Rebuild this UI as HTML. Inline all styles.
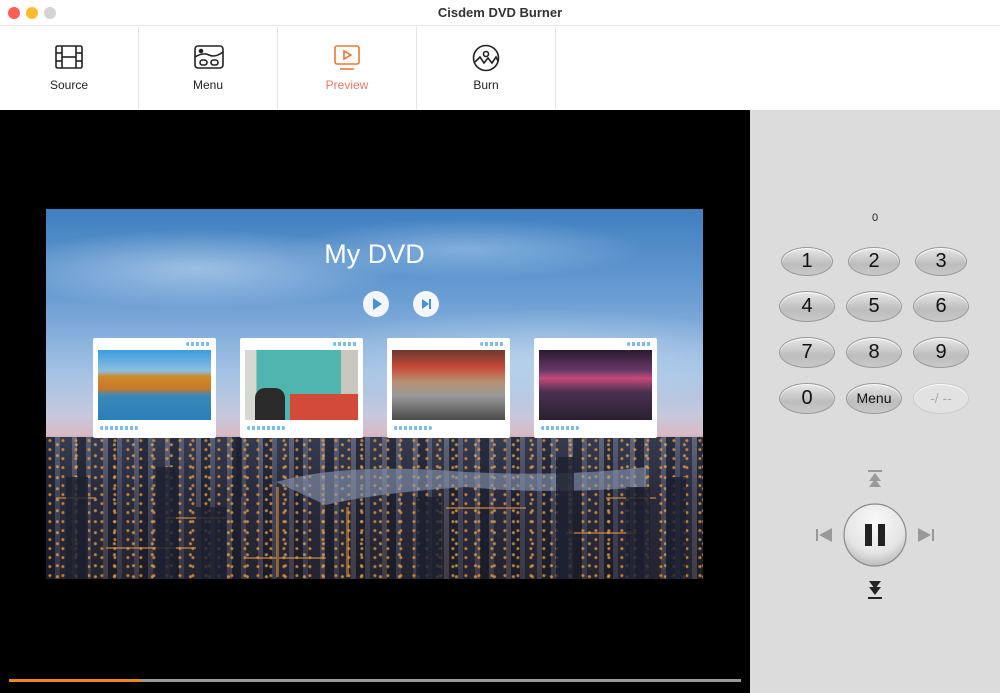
<!DOCTYPE html>
<html><head><meta charset="utf-8"><style>
*{margin:0;padding:0;box-sizing:border-box}
body{width:1000px;height:693px;overflow:hidden;font-family:"Liberation Sans",sans-serif;background:#fff;position:relative}
.title{position:absolute;top:0;left:0;width:1000px;height:26px;background:#fff;border-bottom:1px solid #e6e6e6}
.title .t{position:absolute;left:0;width:1000px;text-align:center;top:5px;font-size:13px;font-weight:bold;color:#333}
.dot{position:absolute;top:7px;width:12px;height:12px;border-radius:50%}
.tb{position:absolute;top:27px;left:0;width:1000px;height:83px;background:#fff}
.tab{position:absolute;top:0;height:83px;width:139px;border-right:1px solid #e4e4e4;text-align:center}
.tab svg{position:absolute;left:54px;top:17px}
.tab span{position:absolute;left:0;width:100%;top:51px;font-size:12px;color:#222}
.left{position:absolute;left:0;top:110px;width:750px;height:583px;background:#000}
.right{position:absolute;left:750px;top:110px;width:250px;height:583px;background:#dcdcdc}
.img{position:absolute;left:46px;top:209px;width:657px;height:370px;overflow:hidden;
background:
radial-gradient(ellipse 200px 40px at 150px 60px,rgba(220,235,250,.5),transparent),
radial-gradient(ellipse 250px 50px at 500px 150px,rgba(220,235,250,.45),transparent),
radial-gradient(ellipse 180px 30px at 420px 40px,rgba(200,225,250,.4),transparent),
linear-gradient(180deg,#3f7fc0 0%,#6d9fd4 25%,#a5c3e4 45%,#c7c8dd 56%,#d9b9c4 61%,#8a8ca8 64%,#4a5670 68%,#2a2f45 80%,#2b2630 100%)}
.city{position:absolute;left:0;top:228px;width:657px;height:142px;
background:
radial-gradient(circle at 30% 40%,rgba(230,150,60,.8) 0 1px,transparent 2px) 0 0/13px 9px,
radial-gradient(circle at 60% 70%,rgba(240,180,90,.7) 0 1px,transparent 2px) 0 0/19px 11px,
repeating-linear-gradient(90deg,rgba(20,22,35,.7) 0 9px,rgba(80,80,100,.35) 9px 14px,rgba(30,30,45,.6) 14px 26px,rgba(110,100,110,.3) 26px 31px),
linear-gradient(180deg,#5b6682 0%,#3a3e55 40%,#2e2a33 100%)}
.card{position:absolute;top:129px;width:123px;height:100px;background:#fff;border-radius:2px}
.card .th{position:absolute;left:5px;top:12px;width:113px;height:70px}
.card .d1{position:absolute;right:6px;top:4px;width:24px;height:4px;border-radius:2px;background:repeating-linear-gradient(90deg,#7fbcec 0 3px,#fff 3px 5px)}
.card .d2{position:absolute;left:7px;top:88px;width:38px;height:4px;border-radius:2px;background:repeating-linear-gradient(90deg,#7fbcec 0 3px,#fff 3px 5px)}
.btn{position:absolute;border-radius:50%;background:linear-gradient(180deg,#e8e8e8,#bdbdbd 60%,#c8c8c8);border:1px solid #999;text-align:center;color:#111;font-size:20px;box-shadow:inset 0 1px 1px #fff}
</style></head><body>
<div class="title">
<div class="dot" style="left:8px;background:#fe5f57"></div>
<div class="dot" style="left:26px;background:#febc2e"></div>
<div class="dot" style="left:44px;background:#d4d4d4"></div>
<div class="t">Cisdem DVD Burner</div>
</div>
<div class="tb">
<div class="tab" style="left:0">
<svg width="30" height="26" viewBox="0 0 30 26" fill="none" stroke="#222" stroke-width="1.6"><rect x="2" y="2" width="26" height="22" rx="1.5"/><line x1="8" y1="2" x2="8" y2="24"/><line x1="22" y1="2" x2="22" y2="24"/><line x1="2" y1="9" x2="8" y2="9"/><line x1="2" y1="17" x2="8" y2="17"/><line x1="22" y1="9" x2="28" y2="9"/><line x1="22" y1="17" x2="28" y2="17"/><line x1="8" y1="13" x2="22" y2="13"/></svg>
<span>Source</span></div>
<div class="tab" style="left:139px">
<svg width="32" height="26" viewBox="0 0 32 26" fill="none" stroke="#222" stroke-width="1.6"><rect x="2" y="2" width="28" height="22" rx="3"/><circle cx="8" cy="7" r="1.5" fill="#222"/><path d="M2 13 Q10 8 16 11 T30 8"/><rect x="7" y="16" width="7" height="5" rx="2.5"/><rect x="18" y="16" width="7" height="5" rx="2.5"/></svg>
<span>Menu</span></div>
<div class="tab" style="left:278px">
<svg width="30" height="28" viewBox="0 0 30 28" fill="none" stroke="#e8793a" stroke-width="1.6"><rect x="3" y="2" width="24" height="18" rx="2"/><path d="M12 7 L19 11 L12 15 Z"/><line x1="8" y1="25" x2="22" y2="25"/></svg>
<span style="color:#e8796a">Preview</span></div>
<div class="tab" style="left:417px">
<svg width="30" height="28" viewBox="0 0 30 28" fill="none" stroke="#222" stroke-width="1.6"><circle cx="15" cy="14" r="12.5"/><circle cx="15" cy="10" r="2.5"/><path d="M4 18 L9 13 L13 19 L17 14 L21 19 L25 13 L27 17"/></svg>
<span>Burn</span></div>
</div>
<div class="left">
<div style="position:absolute;left:9px;top:569px;width:732px;height:3px;background:#9a9a9a"></div>
<div style="position:absolute;left:9px;top:569px;width:132px;height:3px;background:#e88a24"></div>
</div>
<div class="right"></div>
<div class="img">
<div class="city">
<svg width="657" height="142" viewBox="0 0 657 142" style="position:absolute;left:0;top:0">
<path d="M230 45 Q300 25 420 35 Q520 40 600 30 L600 50 Q500 58 420 50 Q330 56 280 68 Z" fill="#8a97b2" opacity=".6"/>
<g fill="#e0953e" opacity=".55"><rect x="10" y="60" width="40" height="2"/><rect x="120" y="80" width="60" height="2"/><rect x="300" y="70" width="3" height="70"/><rect x="400" y="70" width="80" height="2"/><rect x="520" y="95" width="70" height="2"/><rect x="60" y="110" width="90" height="2"/><rect x="200" y="120" width="80" height="2"/><rect x="560" y="60" width="50" height="2"/><rect x="230" y="50" width="3" height="90"/></g>
<g fill="#1c2030" opacity=".8"><rect x="110" y="30" width="20" height="112"/><rect x="190" y="0" width="6" height="60"/><rect x="510" y="20" width="18" height="122"/><rect x="580" y="50" width="24" height="92"/><rect x="20" y="40" width="22" height="102"/><rect x="370" y="60" width="25" height="82"/><rect x="150" y="70" width="30" height="72"/><rect x="620" y="40" width="20" height="102"/></g>
</svg>
</div>
<div style="position:absolute;left:0;width:657px;top:30px;text-align:center;font-size:27px;color:#fff">My DVD</div>
<div style="position:absolute;left:317px;top:82px;width:26px;height:26px;border-radius:50%;background:#f4f6fb"><div style="position:absolute;left:10px;top:7px;border-left:9px solid #4a90d9;border-top:6px solid transparent;border-bottom:6px solid transparent"></div></div>
<div style="position:absolute;left:367px;top:82px;width:26px;height:26px;border-radius:50%;background:#f4f6fb"><div style="position:absolute;left:9px;top:8px;border-left:7px solid #4a90d9;border-top:5px solid transparent;border-bottom:5px solid transparent"></div><div style="position:absolute;left:16px;top:8px;width:2px;height:10px;background:#4a90d9"></div></div>
<div class="card" style="left:47px"><div class="d1"></div><div class="th" style="background:linear-gradient(180deg,#3c9ce0 0%,#8cc0e0 30%,#d08a2a 38%,#c9782a 55%,#3a88b8 65%,#2a7fb8 100%)"></div><div class="d2"></div></div>
<div class="card" style="left:194px"><div class="th" style="background:linear-gradient(90deg,#d8d8d0 0 10%,#4fb5ae 10% 85%,#c8c8c0 85%);"><div style="position:absolute;left:10px;top:38px;width:30px;height:32px;background:#2a2a2a;border-radius:10px 10px 0 0"></div><div style="position:absolute;left:45px;top:44px;width:68px;height:26px;background:#d44a3a"></div></div><div class="d1"></div><div class="d2"></div></div>
<div class="card" style="left:341px"><div class="d1"></div><div class="th" style="background:linear-gradient(180deg,#6a3a30 0%,#c84a3a 25%,#b89070 45%,#9a9a9a 65%,#4a4a4a 100%)"></div><div class="d2"></div></div>
<div class="card" style="left:488px"><div class="d1"></div><div class="th" style="background:linear-gradient(180deg,#2a1a30 0%,#6a3a6a 30%,#c84a7a 40%,#4a3050 60%,#2a2030 100%)"></div><div class="d2"></div></div>
</div>
<div style="position:absolute;left:750px;width:250px;top:212px;text-align:center;font-size:11px;color:#222">0</div>
<div class="btn" style="left:781px;top:247px;width:52px;height:29px;line-height:27px">1</div>
<div class="btn" style="left:848px;top:247px;width:52px;height:29px;line-height:27px">2</div>
<div class="btn" style="left:915px;top:247px;width:52px;height:29px;line-height:27px">3</div>
<div class="btn" style="left:779px;top:291px;width:56px;height:31px;line-height:29px">4</div>
<div class="btn" style="left:846px;top:291px;width:56px;height:31px;line-height:29px">5</div>
<div class="btn" style="left:913px;top:291px;width:56px;height:31px;line-height:29px">6</div>
<div class="btn" style="left:779px;top:337px;width:56px;height:31px;line-height:29px">7</div>
<div class="btn" style="left:846px;top:337px;width:56px;height:31px;line-height:29px">8</div>
<div class="btn" style="left:913px;top:337px;width:56px;height:31px;line-height:29px">9</div>
<div class="btn" style="left:779px;top:383px;width:56px;height:31px;line-height:29px">0</div>
<div class="btn" style="left:846px;top:383px;width:56px;height:31px;line-height:29px;font-size:14px">Menu</div>
<div class="btn" style="left:913px;top:383px;width:56px;height:31px;line-height:29px;font-size:14px;background:#e2e2e2;border-color:#ccc;color:#aaa">-/ --</div>
<svg style="position:absolute;left:750px;top:465px" width="250" height="140" viewBox="0 0 250 140">
<rect x="118" y="5" width="14" height="2" fill="#999"/><path d="M125 8 L131 16 L119 16 Z M125 14 L131 22 L119 22 Z" fill="#999"/>
<path d="M125 130 L131 122 L119 122 Z M125 124 L131 116 L119 116 Z" fill="#222"/><rect x="118" y="132" width="14" height="2" fill="#222"/>
<rect x="66" y="64" width="2" height="12" fill="#999"/><path d="M69 70 L82 63 L82 77 Z" fill="#999"/>
<rect x="182" y="64" width="2" height="12" fill="#999"/><path d="M181 70 L168 63 L168 77 Z" fill="#999"/>
<defs><radialGradient id="pb" cx=".5" cy=".3" r=".7"><stop offset="0" stop-color="#fafafa"/><stop offset=".7" stop-color="#e4e4e4"/><stop offset="1" stop-color="#bcbcbc"/></radialGradient></defs>
<circle cx="125" cy="70" r="31" fill="url(#pb)" stroke="#8a8a8a" stroke-width="1.2"/>
<rect x="115" y="59" width="7" height="22" fill="#222"/><rect x="128" y="59" width="7" height="22" fill="#222"/>
</svg>
</body></html>
